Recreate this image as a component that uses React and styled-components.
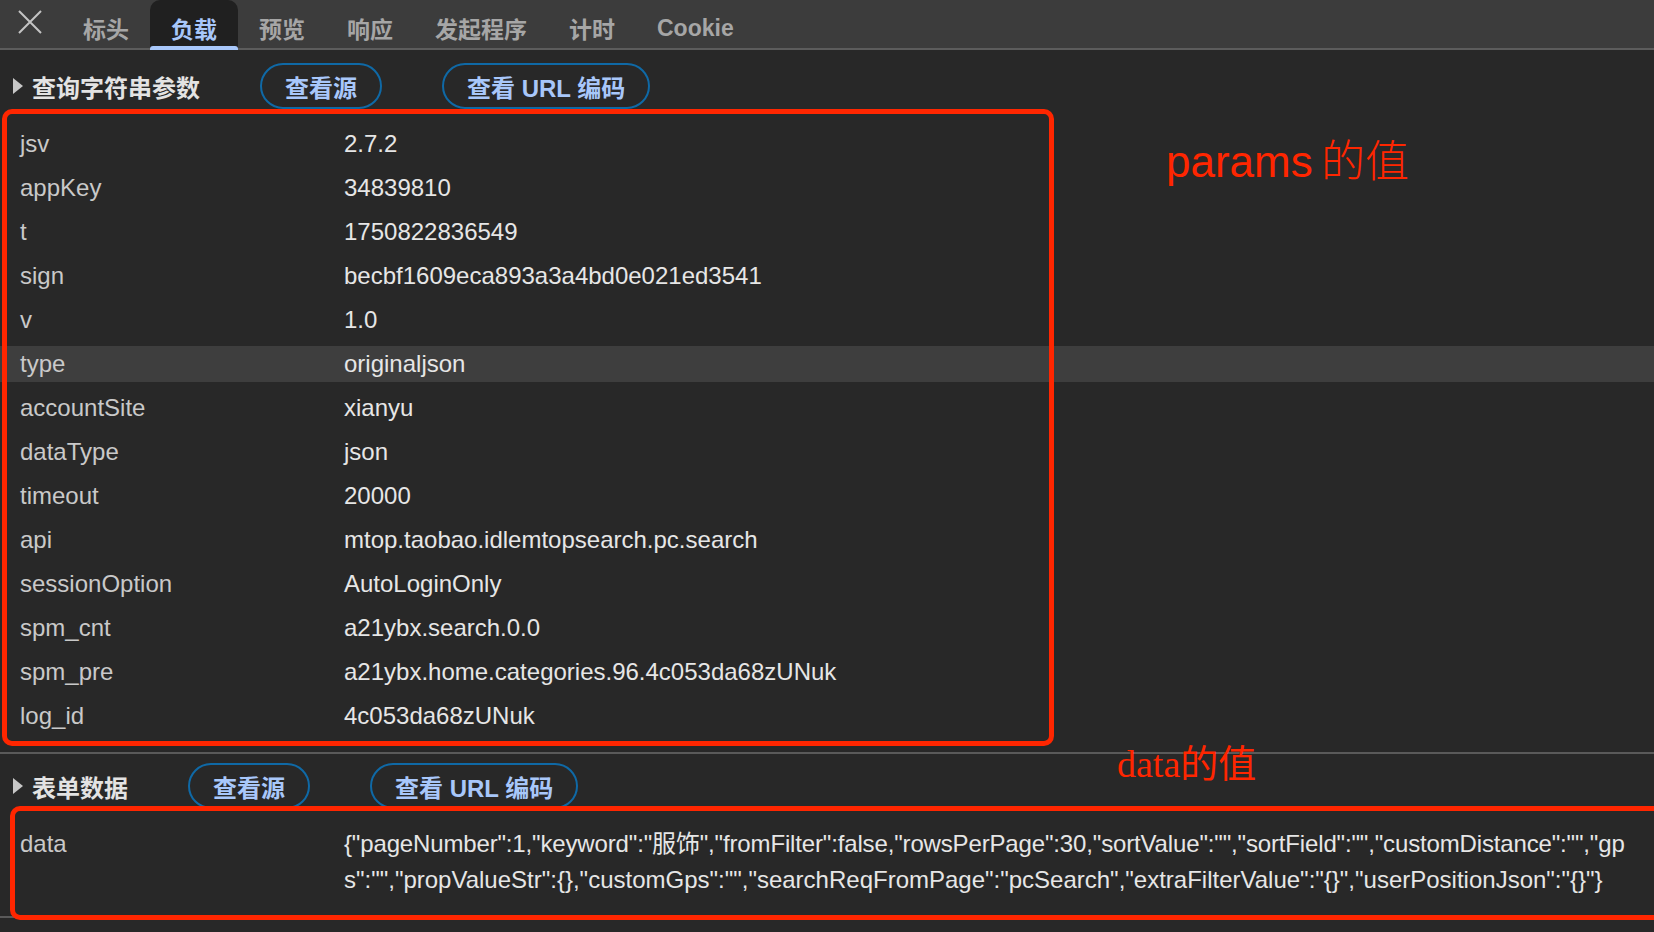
import React from 'react'
import styled, { createGlobalStyle, css } from 'styled-components'

const GlobalStyle = createGlobalStyle`
  html, body {
    margin: 0;
    padding: 0;
    background: #282828;
    overflow: hidden;
  }
  body {
    font-family: "Liberation Sans", "Noto Sans CJK SC", sans-serif;
  }
`

const Page = styled.div`
  position: relative;
  width: 1654px;
  height: 932px;
  overflow: hidden;
  background: #282828;
`

const TabBar = styled.div`
  display: flex;
  align-items: stretch;
  height: 48px;
  padding-left: 12px;
  background: #3c3c3c;
  border-bottom: 2px solid #5c5c5c;
`

const CloseButton = styled.div`
  width: 36px;
  display: flex;
  align-items: center;
  justify-content: center;
  padding-bottom: 4px;
  margin-right: 14px;
`

const Tab = styled.div`
  position: relative;
  display: flex;
  align-items: center;
  padding: 8px 21px 0;
  font-size: 23px;
  font-weight: 700;
  color: ${(p) => (p.$active ? '#a8c7fa' : '#a6a6a6')};
  background: ${(p) => (p.$active ? '#202020' : 'transparent')};
  border-radius: 10px 10px 0 0;

  ${(p) =>
    p.$active &&
    css`
      &::after {
        content: '';
        position: absolute;
        left: 0;
        right: 0;
        bottom: -2px;
        height: 4px;
        border-radius: 3px 3px 0 0;
        background: #a8c7fa;
      }
    `}
`

const Section = styled.section`
  padding: ${(p) => p.$top}px 0 18px;
  border-bottom: 2px solid #5a5a5a;
`

const SectionHeader = styled.div`
  display: flex;
  align-items: center;
  gap: 60px;
  height: 46px;
  padding-left: 13px;
`

const Title = styled.div`
  display: flex;
  align-items: center;
  gap: 9px;
  font-size: 24px;
  font-weight: 700;
  color: #e3e3e3;
`

const Triangle = styled.span`
  width: 0;
  height: 0;
  border-left: 10px solid #c7c7c7;
  border-top: 8px solid transparent;
  border-bottom: 8px solid transparent;
`

const PillButton = styled.button`
  height: 46px;
  padding: 0 23px;
  border: 2px solid #0f69a6;
  border-radius: 23px;
  background: transparent;
  color: #a8c7fa;
  font-family: inherit;
  font-size: 24px;
  font-weight: 700;
  white-space: nowrap;
`

const Rows = styled.div`
  display: flex;
  flex-direction: column;
  gap: 8px;
  margin-top: 17px;
`

const Row = styled.div`
  display: flex;
  align-items: flex-start;
  padding-left: 20px;
  background: ${(p) => (p.$hover ? '#3e3e3e' : 'transparent')};
`

const Key = styled.div`
  flex: none;
  width: 324px;
  font-size: 24px;
  line-height: 36px;
  color: #c9c9c9;
`

const Value = styled.div`
  font-size: 24px;
  line-height: 36px;
  color: #e6e6e6;
  white-space: nowrap;
`

const ValueLine = styled.div`
  white-space: nowrap;
  letter-spacing: ${(p) => p.$tight ? '-0.15px' : '0'};
`

// annotations drawn over the screenshot
const RedBox = styled.div`
  position: absolute;
  left: ${(p) => p.$left}px;
  top: ${(p) => p.$top}px;
  width: ${(p) => p.$width}px;
  height: ${(p) => p.$height}px;
  border: 5px solid #ff2600;
  border-radius: 10px;
  box-sizing: border-box;
  pointer-events: none;
`

const Note = styled.div`
  position: absolute;
  left: ${(p) => p.$left}px;
  top: ${(p) => p.$top}px;
  color: #ff2600;
  white-space: nowrap;
`

const ParamsNote = styled(Note)`
  font-family: "Liberation Sans", "Noto Sans CJK SC", sans-serif;
  font-size: 44px;
  line-height: 44px;
  font-weight: 300;
  word-spacing: -4px;
`

const DataNote = styled(Note)`
  font-family: "Liberation Serif", "Noto Sans CJK SC", serif;
  font-size: 38px;
  line-height: 38px;
`

const tabs = ['标头', '负载', '预览', '响应', '发起程序', '计时', 'Cookie']

const params = [
  ['jsv', '2.7.2'],
  ['appKey', '34839810'],
  ['t', '1750822836549'],
  ['sign', 'becbf1609eca893a3a4bd0e021ed3541'],
  ['v', '1.0'],
  ['type', 'originaljson'],
  ['accountSite', 'xianyu'],
  ['dataType', 'json'],
  ['timeout', '20000'],
  ['api', 'mtop.taobao.idlemtopsearch.pc.search'],
  ['sessionOption', 'AutoLoginOnly'],
  ['spm_cnt', 'a21ybx.search.0.0'],
  ['spm_pre', 'a21ybx.home.categories.96.4c053da68zUNuk'],
  ['log_id', '4c053da68zUNuk'],
]

const dataLines = [
  '{"pageNumber":1,"keyword":"服饰","fromFilter":false,"rowsPerPage":30,"sortValue":"","sortField":"","customDistance":"","gp',
  's":"","propValueStr":{},"customGps":"","searchReqFromPage":"pcSearch","extraFilterValue":"{}","userPositionJson":"{}"}',
]

const CloseIcon = () => (
  <svg width="24" height="24" viewBox="0 0 24 24">
    <path d="M1 1 L23 23 M23 1 L1 23" stroke="#c4c4c4" strokeWidth="2" />
  </svg>
)

const Header = ({ title }) => (
  <SectionHeader>
    <Title>
      <Triangle />
      {title}
    </Title>
    <PillButton>查看源</PillButton>
    <PillButton>查看 URL 编码</PillButton>
  </SectionHeader>
)

const App = () => {
  return (
    <Page>
      <GlobalStyle />
      <TabBar>
        <CloseButton>
          <CloseIcon />
        </CloseButton>
        {tabs.map((t) => (
          <Tab key={t} $active={t === '负载'}>
            {t}
          </Tab>
        ))}
      </TabBar>

      <Section $top={13}>
        <Header title="查询字符串参数" />
        <Rows>
          {params.map(([k, v]) => (
            <Row key={k} $hover={k === 'type'}>
              <Key>{k}</Key>
              <Value>{v}</Value>
            </Row>
          ))}
        </Rows>
      </Section>

      <Section $top={9}>
        <Header title="表单数据" />
        <Rows>
          <Row>
            <Key>data</Key>
            <Value>
              {dataLines.map((l, i) => (
                <ValueLine key={l} $tight={i === 0}>{l}</ValueLine>
              ))}
            </Value>
          </Row>
        </Rows>
      </Section>

      <RedBox $left={2} $top={109} $width={1052} $height={637} />
      <RedBox $left={10} $top={806} $width={1700} $height={114} />
      <ParamsNote $left={1166} $top={140}>params 的值</ParamsNote>
      <DataNote $left={1117} $top={745}>data的值</DataNote>
    </Page>
  )
}

export default App
